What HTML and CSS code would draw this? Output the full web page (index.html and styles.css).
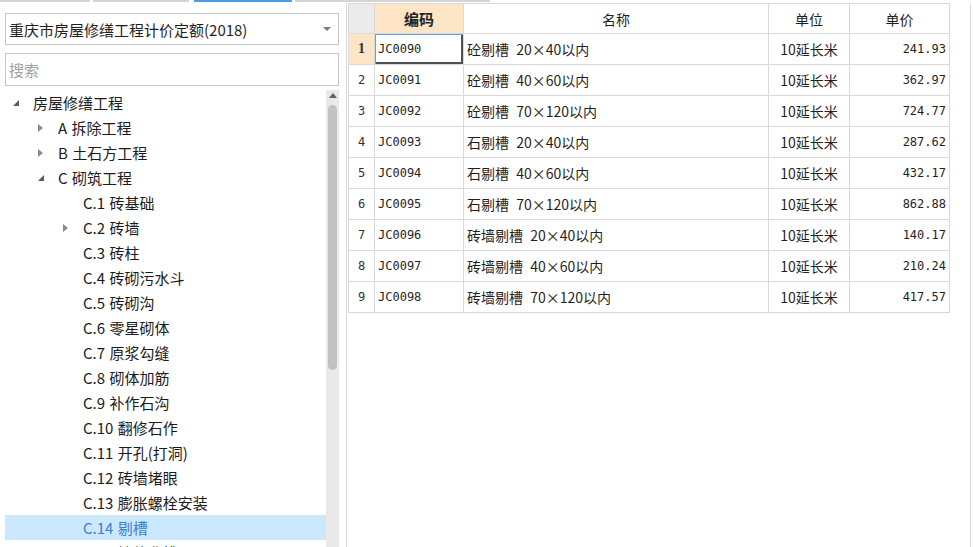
FILE: index.html
```html
<!DOCTYPE html>
<html lang="zh-CN">
<head>
<meta charset="utf-8">
<title>定额库</title>
<link rel="stylesheet" href="styles.css">
</head>
<body>
<div class="tabs">
  <span class="tab t1"></span>
  <span class="tab t2"></span>
  <span class="tab t3 active"></span>
  <span class="tab t4"></span>
</div>
<div class="main">
  <aside class="left">
    <div class="combo">
      <span class="combo-text">重庆市房屋修缮工程计价定额(2018)</span>
      <svg class="combo-arrow" width="8" height="4" viewBox="0 0 8 4"><polygon points="0,0 8,0 4,4" fill="#7a7a7a"/></svg>
    </div>
    <div class="search">搜索</div>
    <div class="treebox">
      <div class="tree">
        <div class="node l0"><span class="twisty"><svg width="6" height="6" viewBox="0 0 6 6"><polygon points="6,0 6,6 0,6" fill="#595959"/></svg></span><span>房屋修缮工程</span></div>
        <div class="node l1"><span class="twisty"><svg width="5" height="8" viewBox="0 0 5 8"><polygon points="0,0 5,4 0,8" fill="#8a8a8a"/></svg></span><span>A 拆除工程</span></div>
        <div class="node l1"><span class="twisty"><svg width="5" height="8" viewBox="0 0 5 8"><polygon points="0,0 5,4 0,8" fill="#8a8a8a"/></svg></span><span>B 土石方工程</span></div>
        <div class="node l1"><span class="twisty"><svg width="6" height="6" viewBox="0 0 6 6"><polygon points="6,0 6,6 0,6" fill="#595959"/></svg></span><span>C 砌筑工程</span></div>
        <div class="node l2"><span class="twisty"></span><span>C.1 砖基础</span></div>
        <div class="node l2"><span class="twisty"><svg width="5" height="8" viewBox="0 0 5 8"><polygon points="0,0 5,4 0,8" fill="#8a8a8a"/></svg></span><span>C.2 砖墙</span></div>
        <div class="node l2"><span class="twisty"></span><span>C.3 砖柱</span></div>
        <div class="node l2"><span class="twisty"></span><span>C.4 砖砌污水斗</span></div>
        <div class="node l2"><span class="twisty"></span><span>C.5 砖砌沟</span></div>
        <div class="node l2"><span class="twisty"></span><span>C.6 零星砌体</span></div>
        <div class="node l2"><span class="twisty"></span><span>C.7 原浆勾缝</span></div>
        <div class="node l2"><span class="twisty"></span><span>C.8 砌体加筋</span></div>
        <div class="node l2"><span class="twisty"></span><span>C.9 补作石沟</span></div>
        <div class="node l2"><span class="twisty"></span><span>C.10 翻修石作</span></div>
        <div class="node l2"><span class="twisty"></span><span>C.11 开孔(打洞)</span></div>
        <div class="node l2"><span class="twisty"></span><span>C.12 砖墙堵眼</span></div>
        <div class="node l2"><span class="twisty"></span><span>C.13 膨胀螺栓安装</span></div>
        <div class="node l2 sel"><span class="twisty"></span><span>C.14 剔槽</span></div>
        <div class="node l2"><span class="twisty"></span><span>C.15 墙体凿槽</span></div>
      </div>
      <div class="vscroll">
        <svg class="up" width="8" height="5" viewBox="0 0 8 5"><polygon points="4,0 8,5 0,5" fill="#606060"/></svg>
        <div class="thumb"></div>
      </div>
    </div>
  </aside>
  <section class="right">
    <table class="grid">
      <colgroup>
        <col class="c-num"><col class="c-code"><col class="c-name"><col class="c-unit"><col class="c-price">
      </colgroup>
      <thead>
        <tr>
          <th class="corner"></th>
          <th class="hl">编码</th>
          <th>名称</th>
          <th>单位</th>
          <th>单价</th>
        </tr>
      </thead>
      <tbody>
        <tr><td class="num cur">1</td><td class="code focus">JC0090</td><td class="name">砼剔槽 20×40以内</td><td class="unit">10延长米</td><td class="price">241.93</td></tr>
        <tr><td class="num">2</td><td class="code">JC0091</td><td class="name">砼剔槽 40×60以内</td><td class="unit">10延长米</td><td class="price">362.97</td></tr>
        <tr><td class="num">3</td><td class="code">JC0092</td><td class="name">砼剔槽 70×120以内</td><td class="unit">10延长米</td><td class="price">724.77</td></tr>
        <tr><td class="num">4</td><td class="code">JC0093</td><td class="name">石剔槽 20×40以内</td><td class="unit">10延长米</td><td class="price">287.62</td></tr>
        <tr><td class="num">5</td><td class="code">JC0094</td><td class="name">石剔槽 40×60以内</td><td class="unit">10延长米</td><td class="price">432.17</td></tr>
        <tr><td class="num">6</td><td class="code">JC0095</td><td class="name">石剔槽 70×120以内</td><td class="unit">10延长米</td><td class="price">862.88</td></tr>
        <tr><td class="num">7</td><td class="code">JC0096</td><td class="name">砖墙剔槽 20×40以内</td><td class="unit">10延长米</td><td class="price">140.17</td></tr>
        <tr><td class="num">8</td><td class="code">JC0097</td><td class="name">砖墙剔槽 40×60以内</td><td class="unit">10延长米</td><td class="price">210.24</td></tr>
        <tr><td class="num">9</td><td class="code">JC0098</td><td class="name">砖墙剔槽 70×120以内</td><td class="unit">10延长米</td><td class="price">417.57</td></tr>
      </tbody>
    </table>
  </section>
</div>
</body>
</html>
```

FILE: styles.css
```css
* { box-sizing: border-box; }
html, body { margin: 0; padding: 0; }
body {
  width: 973px;
  height: 547px;
  overflow: hidden;
  background: #fff;
  color: #1f1f1f;
  font-family: "Noto Sans CJK SC", "Noto Sans", sans-serif;
}

/* top tab remnants */
.tabs { display: flex; height: 3px; }
.tab { height: 2px; background: #d4d4d4; }
.t1 { width: 90px; margin-right: 3px; }
.t2 { width: 96px; margin-right: 5px; }
.t3 { width: 98px; margin-right: 3px; }
.t4 { width: 195px; }
.tab.active { background: #4c9be6; }

.main { display: flex; height: 544px; }

/* left panel */
.left {
  width: 347px;
  border-right: 1px solid #dadada;
  padding: 10px 7px 0 5px;
  display: flex;
  flex-direction: column;
}
.combo {
  height: 32px;
  border: 1px solid #c6c6c6;
  display: flex;
  align-items: center;
  justify-content: space-between;
  padding: 0 7px 0 3px;
  font-size: 15px;
  color: #1f1f1f;
}
.search {
  margin-top: 8px;
  height: 33px;
  border: 1px solid #c6c6c6;
  display: flex;
  align-items: center;
  padding-left: 3px;
  font-size: 15px;
  color: #a0a0a0;
}
.treebox { margin-top: 4px; flex: 1; display: flex; min-height: 0; overflow: hidden; }
.tree { flex: 1; overflow: hidden; }
.node {
  height: 25px;
  display: flex;
  align-items: center;
  font-size: 15px;
  white-space: nowrap;
  color: #1c1c1c;
  word-spacing: 1px;
}
.node.l0 { padding-left: 8px; }
.node.l1 { padding-left: 33px; }
.node.l2 { padding-left: 58px; }
.twisty { width: 20px; height: 25px; display: flex; align-items: center; padding-top: 1px; flex: none; }
.node.sel { background: #cce8ff; color: #3a7fd5; }

.vscroll {
  width: 13px;
  background: #e9e9e9;
  display: flex;
  flex-direction: column;
  align-items: center;
}
.vscroll .up { margin-top: 3px; }
.thumb {
  margin-top: 7px;
  width: 9px;
  height: 265px;
  border-radius: 5px;
  background: #c2c2c2;
}

/* right panel */
.right {
  width: 624px;
  border-right: 1px solid #dcdcdc;
  padding-left: 1px;
}
.grid {
  border-collapse: collapse;
  table-layout: fixed;
  width: 601px;
  font-size: 14px;
  color: #1f1f1f;
}
.c-num { width: 26px; }
.c-code { width: 89px; }
.c-name { width: 305px; }
.c-unit { width: 81px; }
.c-price { width: 100px; }
.grid th, .grid td {
  border: 1px solid #d9d9d9;
  padding: 0 3px;
  white-space: nowrap;
  overflow: hidden;
}
.grid thead tr { height: 30px; }
.grid tbody tr { height: 31px; }
.grid th { font-weight: normal; text-align: center; font-size: 14px; }
.grid th.corner { background: #ebebeb; }
.grid th.hl { background: #fde5c6; font-weight: bold; font-size: 15px; }

.num {
  text-align: center;
  font-family: "DejaVu Sans Mono", monospace;
  font-size: 12px;
  color: #333;
  padding: 0 !important;
}
.num.cur { background: #fde5c6; font-weight: bold; font-family: "Liberation Serif", serif; font-size: 14px; }
.code { font-family: "DejaVu Sans Mono", monospace; font-size: 12px; }
.code.focus { box-shadow: inset 1px 1px 0 #5aa2e8, inset -2px -2px 0 #505050; }
.name { text-align: left; word-spacing: 4px; }
.unit { text-align: center; }
.price { text-align: right; font-family: "DejaVu Sans Mono", monospace; font-size: 12px; }
```
